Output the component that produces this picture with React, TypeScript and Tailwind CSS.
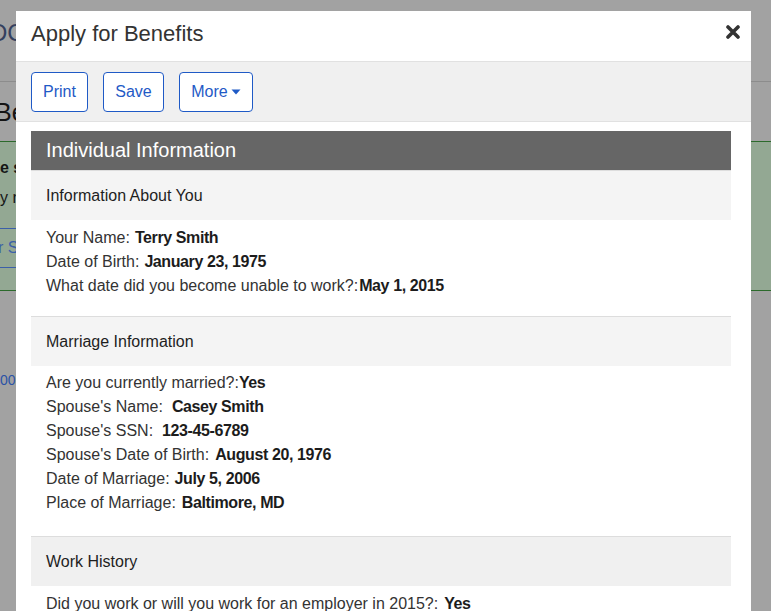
import React from 'react'

type Row = { label: string; value: string; gap: number }

const SECTIONS: { title: string; bg: string; pt: string; pb: string; rows: Row[] }[] = [
  {
    title: 'Information About You',
    bg: 'bg-[#f4f4f4]',
    pt: 'pt-[6px]',
    pb: 'pb-[18px]',
    rows: [
      { label: 'Your Name:', value: 'Terry Smith', gap: 5 },
      { label: 'Date of Birth:', value: 'January 23, 1975', gap: 5 },
      { label: 'What date did you become unable to work?:', value: 'May 1, 2015', gap: 1 },
    ],
  },
  {
    title: 'Marriage Information',
    bg: 'bg-[#f4f4f4]',
    pt: 'pt-[5px]',
    pb: 'pb-[21px]',
    rows: [
      { label: 'Are you currently married?:', value: 'Yes', gap: 0 },
      { label: "Spouse's Name:", value: 'Casey Smith', gap: 9 },
      { label: "Spouse's SSN:", value: '123-45-6789', gap: 9 },
      { label: "Spouse's Date of Birth:", value: 'August 20, 1976', gap: 6 },
      { label: 'Date of Marriage:', value: 'July 5, 2006', gap: 5 },
      { label: 'Place of Marriage:', value: 'Baltimore, MD', gap: 6 },
    ],
  },
  {
    title: 'Work History',
    bg: 'bg-[#f0f0f0]',
    pt: 'pt-[6px]',
    pb: 'pb-[18px]',
    rows: [{ label: 'Did you work or will you work for an employer in 2015?:', value: 'Yes', gap: 6 }],
  },
]

function CloseIcon() {
  return (
    <svg width="14" height="14" viewBox="0 0 14 14" aria-hidden>
      <path d="M2 2 L12 12 M12 2 L2 12" stroke="#333" strokeWidth="3.6" strokeLinecap="round" />
    </svg>
  )
}

function Caret() {
  return (
    <svg width="10" height="6" viewBox="0 0 10 6" aria-hidden>
      <path d="M0.5 0.5 H9.5 L5 5.5 Z" fill="currentColor" />
    </svg>
  )
}

function ToolButton({ children, w }: { children: React.ReactNode; w: string }) {
  return (
    <button
      className={`${w} h-[40px] rounded-[4px] border border-[#1f5ac6] bg-white text-[16px] text-[#1f5ac6] flex items-center justify-center gap-[3px]`}
    >
      {children}
    </button>
  )
}

export default function App() {
  return (
    <div className="relative h-[611px] w-[771px] overflow-hidden bg-[#a2a2a2] font-['Liberation_Sans',Arial,sans-serif]">
      {/* Page behind the dialog (dimmed) */}
      <div className="h-[82px] border-b border-[#8c8c8c] pt-[19px] text-[24px] leading-[28px] text-[#34405e] whitespace-nowrap">
        <span className="-ml-[10px] inline-block">DC</span>
      </div>
      <div className="h-[59px] pt-[16px] text-[25px] leading-[28px] text-[#141414] whitespace-nowrap">
        <span className="-ml-[5px] inline-block">Be</span>
      </div>
      <div className="h-[150px] border-y border-[#2c6a2c] bg-[#93a893] text-[16px] leading-[20px] text-[#161616] whitespace-nowrap">
        <div className="pt-[16px] font-bold">e s</div>
        <div className="mt-[10px]">y r</div>
        <div className="mt-[20px] mr-[60px] h-[40px] border-y border-[#3b5fa8] leading-[38px] text-[#3b5fa8]">
          <span className="-ml-[2px] inline-block">r S</span>
        </div>
      </div>
      <div className="pt-[79px] text-[14px] leading-[20px] text-[#2b52a6]">00</div>

      {/* Dialog */}
      <div className="absolute left-[16px] top-[11px] bottom-0 w-[735px] overflow-hidden bg-white">
        <div className="h-[51px] border-b border-[#e1e1e1] flex justify-between pl-[15px] pr-[11px]">
          <h1 className="pt-[10px] text-[22px] leading-[25px] text-[#333]">Apply for Benefits</h1>
          <button className="mt-[14px] h-[14px]">
            <CloseIcon />
          </button>
        </div>

        <div className="h-[60px] border-b border-[#e1e1e1] bg-[#f0f0f0] px-[15px] flex items-center gap-[15px]">
          <ToolButton w="w-[57px]">Print</ToolButton>
          <ToolButton w="w-[61px]">Save</ToolButton>
          <ToolButton w="w-[74px]">
            More
            <Caret />
          </ToolButton>
        </div>

        <div className="pl-[15px] pr-[20px] pt-[9px]">
          <div className="h-[39px] bg-[#666] px-[15px] pb-[1px] flex items-center text-[20px] text-white">
            Individual Information
          </div>
          {SECTIONS.map((s) => (
            <section key={s.title} className="border-t border-[#dddddd]">
              <div className={`h-[49px] ${s.bg} px-[15px] flex items-center text-[16px] text-[#1e1e1e]`}>
                {s.title}
              </div>
              <div className={`${s.pt} ${s.pb} px-[15px] text-[16px] leading-[24px] text-[#333]`}>
                {s.rows.map((r) => (
                  <div key={r.label} className="whitespace-nowrap">
                    <span>{r.label}</span>
                    <span
                      className="font-bold tracking-[-0.4px] text-[#1c1c1c]"
                      style={{ marginLeft: r.gap }}
                    >
                      {r.value}
                    </span>
                  </div>
                ))}
              </div>
            </section>
          ))}
        </div>
      </div>
    </div>
  )
}
